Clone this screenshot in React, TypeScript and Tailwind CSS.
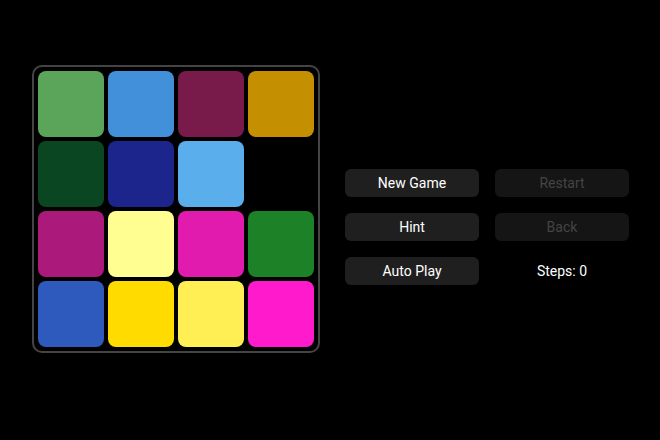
const tiles: (string | null)[] = [
  '#5ba55b', '#4190d9', '#781b4a', '#c48f00',
  '#0b4622', '#1b258c', '#5aaeec', null,
  '#ab1a7a', '#ffff91', '#e01bae', '#1c8127',
  '#2f5abd', '#ffdb00', '#ffef55', '#ff1bcb',
];

function Btn({ label, disabled }: { label: string; disabled?: boolean }) {
  return (
    <button
      type="button"
      disabled={disabled}
      className={
        disabled
          ? 'h-7 rounded-md bg-[#151515] text-[#444] text-sm'
          : 'h-7 rounded-md bg-[#1f1f1f] text-white text-sm'
      }
    >
      {label}
    </button>
  );
}

export default function App() {
  return (
    <div
      className="w-[660px] h-[440px] bg-black flex items-start pl-8 pt-[65px] gap-[25px]"
      style={{ fontFamily: 'Roboto, "Noto Sans", sans-serif' }}
    >
      <div className="w-[288px] h-[288px] border-2 border-[#444] rounded-[10px] p-1 grid grid-cols-4 gap-1">
        {tiles.map((c, i) =>
          c ? (
            <div key={i} className="w-[66px] h-[66px] rounded-lg" style={{ backgroundColor: c }} />
          ) : (
            <div key={i} className="w-[66px] h-[66px]" />
          )
        )}
      </div>
      <div className="mt-[104px] w-[284px] grid grid-cols-2 gap-x-4 gap-y-4">
        <Btn label="New Game" />
        <Btn label="Restart" disabled />
        <Btn label="Hint" />
        <Btn label="Back" disabled />
        <Btn label="Auto Play" />
        <div className="h-7 flex items-center justify-center text-white text-sm">Steps: 0</div>
      </div>
    </div>
  );
}
